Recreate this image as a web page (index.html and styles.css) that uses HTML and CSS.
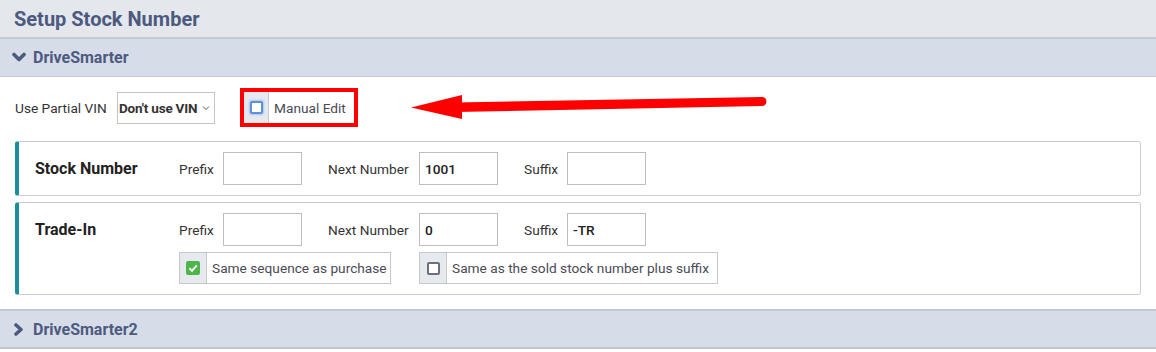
FILE: index.html
```html
<!DOCTYPE html>
<html lang="en">
<head>
    <meta charset="UTF-8">
    <title>Setup Stock Number</title>
    <link rel="stylesheet" href="styles.css">
</head>
<body>
<div class="page">
    <div class="page-title">Setup Stock Number</div>

    <div class="panel">
        <div class="panel-head">
            <svg class="chev" width="14" height="11" viewBox="0 0 14 11"><path d="M2 2.5 L7 7.5 L12 2.5" fill="none" stroke="#4d5a80" stroke-width="3.6" stroke-linecap="round" stroke-linejoin="round"/></svg>
            DriveSmarter
        </div>
        <div class="panel-body">
            <div class="vin-row">
                <span class="vin-label">Use Partial VIN</span>
                <div class="fake-select">Don't use VIN
                    <svg width="8" height="6" viewBox="0 0 8 6"><path d="M1 1.5 L4 4.5 L7 1.5" fill="none" stroke="#555" stroke-width="1"/></svg>
                </div>
                <div class="manual-edit">
                    <div class="check-group">
                        <span class="addon"><span class="box box-focus"></span></span>
                        <span class="check-text">Manual Edit</span>
                    </div>
                </div>
            </div>

            <div class="card">
                <div class="card-title">Stock Number</div>
                <div class="fields">
                    <div class="field-row">
                        <span class="lbl lbl-prefix">Prefix</span><span class="inp"></span>
                        <span class="lbl lbl-next">Next Number</span><span class="inp">1001</span>
                        <span class="lbl lbl-suffix">Suffix</span><span class="inp"></span>
                    </div>
                </div>
            </div>

            <div class="card">
                <div class="card-title">Trade-In</div>
                <div class="fields">
                    <div class="field-row">
                        <span class="lbl lbl-prefix">Prefix</span><span class="inp"></span>
                        <span class="lbl lbl-next">Next Number</span><span class="inp">0</span>
                        <span class="lbl lbl-suffix">Suffix</span><span class="inp">-TR</span>
                    </div>
                    <div class="check-row">
                        <div class="check-group check-first">
                            <span class="addon addon-wide">
                                <svg class="box-checked" width="14" height="14" viewBox="0 0 14 14"><rect width="14" height="14" rx="2" fill="#4cb748"/><path d="M3.3 7.2 L6 9.8 L10.8 4.4" fill="none" stroke="#fff" stroke-width="1.9"/></svg>
                            </span>
                            <span class="check-text">Same sequence as purchase</span>
                        </div>
                        <div class="check-group">
                            <span class="addon addon-wide"><span class="box"></span></span>
                            <span class="check-text">Same as the sold stock number plus suffix</span>
                        </div>
                    </div>
                </div>
            </div>
        </div>
    </div>

    <div class="panel panel-closed">
        <div class="panel-head">
            <svg class="chev" width="14" height="13" viewBox="0 0 14 13"><path d="M4 2 L9 6.5 L4 11" fill="none" stroke="#4d5a80" stroke-width="3.6" stroke-linecap="round" stroke-linejoin="round"/></svg>
            DriveSmarter2
        </div>
    </div>

    <!-- annotation arrow drawn over the page -->
    <svg class="arrow" width="1156" height="352" viewBox="0 0 1156 352">
        <path d="M455 102.5 L762 97 L762 106 L455 112 Z" fill="#ff0000"/>
        <circle cx="762" cy="101.5" r="4.5" fill="#ff0000"/>
        <path d="M411 107.5 L462 95 L462 119 Z" fill="#ff0000"/>
    </svg>
</div>
</body>
</html>
```

FILE: styles.css
```css
body {
    margin: 0;
    font-family: Roboto, "Liberation Sans", sans-serif;
    color: #333;
    background: #fff;
}

.page {
    position: relative;
    width: 1156px;
    height: 352px;
    overflow: hidden;
    white-space: nowrap;
}

.page-title {
    height: 37px;
    display: flex;
    align-items: center;
    padding-left: 14px;
    background: #e4e7ec;
    border-bottom: 2px solid #c5c9d0;
    font-size: 20px;
    font-weight: bold;
    color: #4d5a80;
}

.panel-head {
    height: 37px;
    display: flex;
    align-items: center;
    gap: 7px;
    padding-left: 12px;
    background: #d6dde8;
    border-bottom: 1px solid #c3c8d0;
    font-size: 16px;
    font-weight: bold;
    color: #4d5a80;
}

.panel-closed .panel-head {
    height: 36px;
    border-top: 2px solid #c3c8d0;
    border-bottom: 2px solid #bfc3ca;
}

.panel-body {
    padding: 11px 15px 14px 15px;
}

.vin-row {
    display: flex;
    align-items: center;
    height: 39px;
}

.vin-label {
    font-size: 13.7px;
    color: #333;
    width: 102px;
}

.fake-select {
    width: 98px;
    height: 32px;
    box-sizing: border-box;
    border: 1px solid #c4c4c4;
    display: flex;
    align-items: center;
    justify-content: space-between;
    padding: 0 4px 0 1px;
    font-size: 13.5px;
    font-weight: bold;
    letter-spacing: -0.2px;
    color: #333;
}

.manual-edit {
    margin-left: 25px;
    border: 4px solid #ff0000;
}

.check-group {
    display: flex;
    height: 31px;
    border: 1px solid #c8c8c8;
    box-sizing: border-box;
}

.manual-edit .check-group {
    border: none;
    height: 31px;
}

.addon {
    width: 24px;
    flex-shrink: 0;
    display: flex;
    align-items: center;
    justify-content: center;
    background: #e6e9ee;
    border-right: 1px solid #c8c8c8;
}

.addon-wide {
    width: 26px;
}

.box {
    width: 13px;
    height: 13px;
    box-sizing: border-box;
    border: 2px solid #6e6e7e;
    border-radius: 2px;
    background: #fff;
}

.box-focus {
    border: 2px solid #5d8fda;
    box-shadow: 0 0 2px 1px #a9c4ee;
}

.check-text {
    display: flex;
    align-items: center;
    padding: 0 8px 0 5px;
    font-size: 13.7px;
    color: #4a4a55;
}

.manual-edit .check-text {
    padding-right: 8px;
}

.check-first .check-text {
    padding-right: 2px;
}

.card {
    display: flex;
    margin-top: 14px;
    border: 1px solid #c9cdd4;
    border-left: 4px solid #1a8e9e;
    border-radius: 3px;
    padding: 10px 0 10px 16px;
}

.card + .card {
    margin-top: 6px;
}

.card-title {
    width: 144px;
    height: 33px;
    display: flex;
    align-items: center;
    font-size: 16px;
    font-weight: bold;
    color: #222;
}

.field-row {
    display: flex;
    align-items: center;
}

.lbl {
    font-size: 13.7px;
    color: #333;
}

.lbl-prefix { width: 44px; }
.lbl-next { width: 91px; margin-left: 26px; }
.lbl-suffix { width: 43px; margin-left: 26px; }

.inp {
    width: 79px;
    height: 33px;
    box-sizing: border-box;
    border: 1px solid #bdbdbd;
    display: flex;
    align-items: center;
    padding-left: 5px;
    font-size: 13.7px;
    font-weight: 500;
    color: #222;
}

.check-row {
    display: flex;
    margin-top: 6px;
}

.check-row .check-group {
    height: 32px;
}

.check-first {
    width: 212px;
    margin-right: 28px;
}

.arrow {
    position: absolute;
    top: 0;
    left: 0;
    pointer-events: none;
}
```
